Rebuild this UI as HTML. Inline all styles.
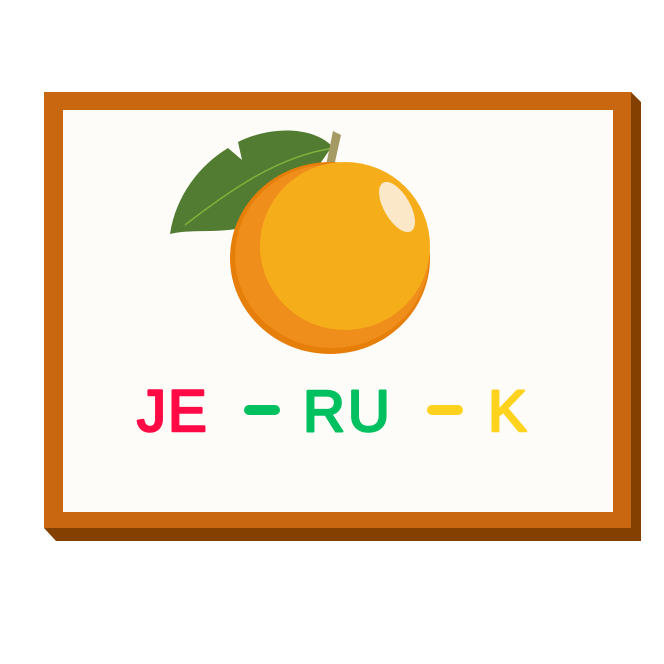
<!DOCTYPE html>
<html><head><style>
html,body{margin:0;padding:0;background:#fff;width:664px;height:664px;overflow:hidden}
</style></head><body>
<svg width="664" height="664" viewBox="0 0 664 664" xmlns="http://www.w3.org/2000/svg">
<polygon points="631,92 641,102 641,541 56,541 44,528 631,528" fill="#844000"/>
<rect x="44" y="92" width="587" height="436" fill="#c8670f"/>
<rect x="63" y="110" width="550" height="402" fill="#fdfcf8"/>
<!-- leaf -->
<path d="M170,234 C176,195 200,165 228,148 L242,160 L238,142 C270,126 312,126 332,146 C312,178 290,198 250,225 C225,235 195,228 170,234 Z" fill="#517c31"/>
<path d="M185,225 C230,190 280,155 335,148" stroke="#7fb23a" stroke-width="1.5" fill="none"/>
<!-- stem -->
<path d="M333,131 L341,135 L333,171 L325,170 Z" fill="#a59a64"/>
<!-- orange -->
<ellipse cx="330" cy="258" rx="100" ry="96" fill="#e67e0a"/>
<ellipse cx="332" cy="256" rx="97" ry="92" fill="#f08e1c"/>
<ellipse cx="345" cy="246" rx="85" ry="84" fill="#f6ad1a"/>
<ellipse cx="397" cy="207" rx="13" ry="28" transform="rotate(-30 397 207)" fill="#fbe8c8"/>
<g font-family="'Liberation Sans',sans-serif" font-size="58" stroke-linejoin="round" stroke-linecap="round" stroke-width="2.5">
<text x="137" y="431" fill="#ff0a45" stroke="#ff0a45" letter-spacing="2">JE</text>
<text x="303" y="431" fill="#00c060" stroke="#00c060" letter-spacing="3">RU</text>
<text x="488" y="431" fill="#ffd21e" stroke="#ffd21e">K</text>
</g>
<line x1="249" y1="410" x2="275" y2="410" stroke="#00c060" stroke-width="10" stroke-linecap="round"/>
<line x1="432" y1="410" x2="458" y2="410" stroke="#ffd21e" stroke-width="10" stroke-linecap="round"/>
</svg>
</body></html>
